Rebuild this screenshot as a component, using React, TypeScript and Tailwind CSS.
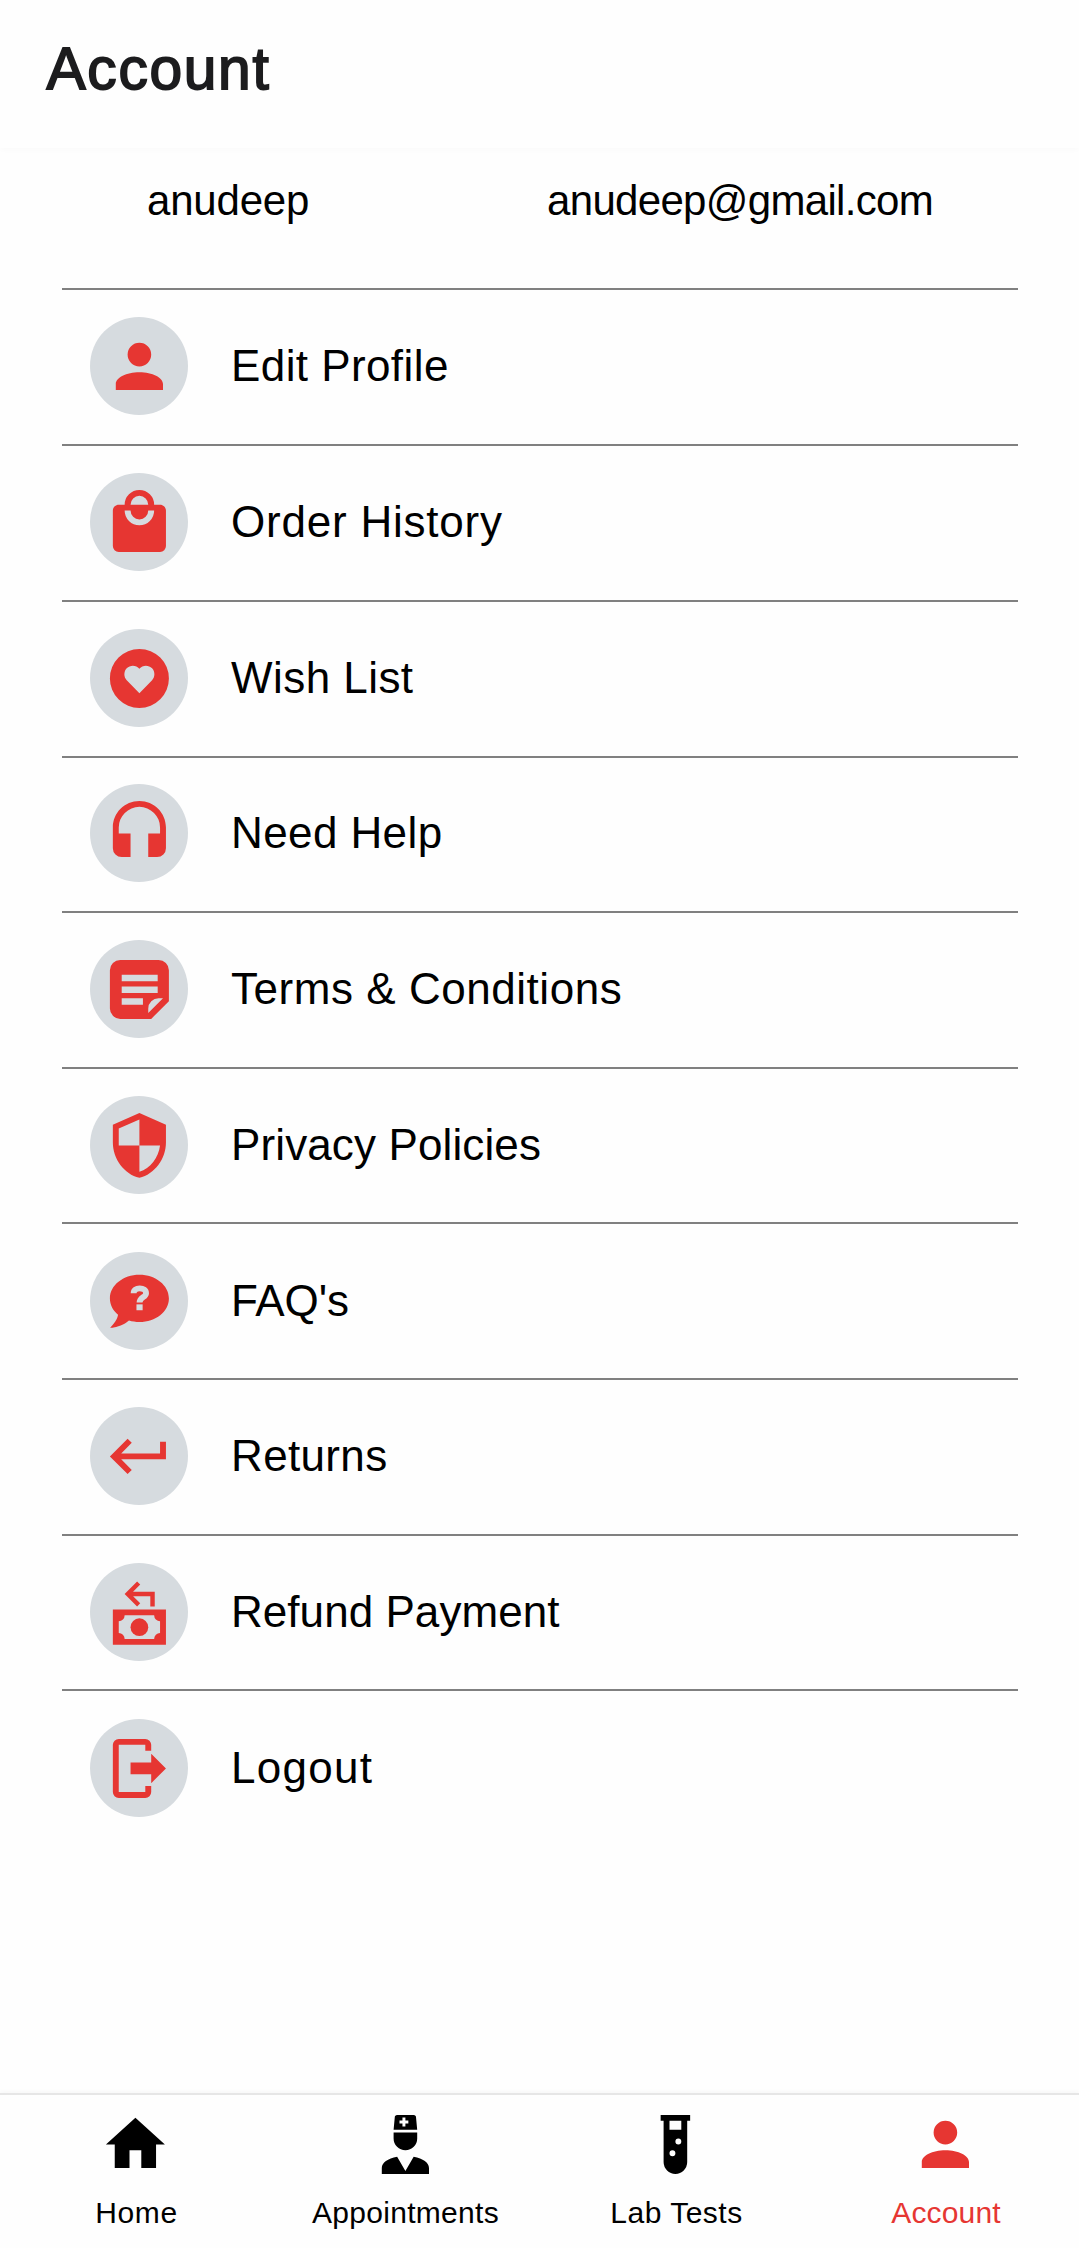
import type { ReactNode } from "react";

type IconProps = { className?: string; children: ReactNode };

function Icon({ className = "", children }: IconProps) {
  return (
    <svg viewBox="0 0 24 24" fill="currentColor" aria-hidden="true" className={`size-[70.8px] shrink-0 ${className}`}>
      {children}
    </svg>
  );
}

const person = (
  <path d="M12 4a4 4 0 0 1 4 4 4 4 0 0 1-4 4 4 4 0 0 1-4-4 4 4 0 0 1 4-4m0 10c4.42 0 8 1.79 8 4v2H4v-2c0-2.21 3.58-4 8-4z" />
);

const bag = (
  <path d="M12 13A5 5 0 0 1 7 8H9A3 3 0 0 0 12 11A3 3 0 0 0 15 8H17A5 5 0 0 1 12 13M12 3A3 3 0 0 1 15 6H9A3 3 0 0 1 12 3M19 6H17A5 5 0 0 0 12 1A5 5 0 0 0 7 6H5C3.89 6 3 6.89 3 8V20A2 2 0 0 0 5 22H19A2 2 0 0 0 21 20V8C21 6.89 20.1 6 19 6Z" />
);

const heart = (
  <path
    fillRule="evenodd"
    d="M12 2A10 10 0 0 1 22 12A10 10 0 0 1 12 22A10 10 0 0 1 2 12A10 10 0 0 1 12 2ZM12 17L16.3 12.65C17.35 11.5 17.35 9.75 16.3 8.6C15.1 7.4 13.1 7.45 12 8.75C10.9 7.45 8.9 7.4 7.7 8.6C6.65 9.75 6.65 11.5 7.7 12.65Z"
  />
);

const headphones = (
  <path d="M12 1C7 1 3 5 3 10V17A3 3 0 0 0 6 20H9V12H5V10A7 7 0 0 1 12 3A7 7 0 0 1 19 10V12H15V20H18A3 3 0 0 0 21 17V10C21 5 16.97 1 12 1Z" />
);

const note = (
  <path
    fillRule="evenodd"
    d="M5.5 2H18.5A3.5 3.5 0 0 1 22 5.5V16L16 22H5.5A3.5 3.5 0 0 1 2 18.5V5.5A3.5 3.5 0 0 1 5.5 2ZM6 7V9.2H18.2V7ZM6 11V13.2H18.2V11ZM6 15V17.2H13.2V15ZM15 20L20 15H18.5A3.5 3.5 0 0 0 15 18.5Z"
  />
);

const shield = (
  <path d="M12 12H19C18.47 16.11 15.72 19.78 12 20.92V12H5V6.3L12 3.19M12 1L3 5V11C3 16.55 6.84 21.73 12 23C17.16 21.73 21 16.55 21 11V5L12 1Z" />
);

const question = (
  <>
    <path d="M12 3C17.5 3 22 6.58 22 11C22 15.42 17.5 19 12 19C10.76 19 9.57 18.82 8.47 18.5C5.55 21 2 21 2 21C4.33 18.67 4.7 17.1 4.75 16.5C3.05 15.07 2 13.13 2 11C2 6.58 6.5 3 12 3Z" />
    <path
      d="M10.05 9.2C10.05 8.1 10.9 7.6 12.1 7.6C13.4 7.6 14.25 8.15 14.25 9.2C14.25 10.6 12.05 10.6 12.05 12.4"
      fill="none"
      stroke="#d6dbdf"
      strokeWidth="2"
    />
    <path d="M11 13h2.1v2H11z" fill="#d6dbdf" />
  </>
);

const returnArrow = (
  <path d="M19 7V11H5.83L9.41 7.41L8 6L2 12L8 18L9.41 16.58L5.83 13H21V7H19Z" />
);

const refund = (
  <>
    <path
      fillRule="evenodd"
      d="M3 11H21V23H3ZM5 15V19A2 2 0 0 1 7 21H17A2 2 0 0 1 19 19V15A2 2 0 0 1 17 13H7A2 2 0 0 1 5 15Z"
    />
    <circle cx="12" cy="17" r="3" />
    <path d="M11.75 2.05L8.05 5.75L11.75 9.45M8.1 5.75H16.45V10" fill="none" stroke="currentColor" strokeWidth="1.5" />
  </>
);

const logout = (
  <path d="M14 18h2v2a2 2 0 0 1-2 2H5a2 2 0 0 1-2-2V4a2 2 0 0 1 2-2h9a2 2 0 0 1 2 2v2h-2V4H5v16h9zM16 17V14H9V10H16V7L21 12Z" />
);

const home = <path d="M10 20V14H14V20H19V12H22L12 3L2 12H5V20H10Z" />;

const doctor = (
  <>
    <path
      fillRule="evenodd"
      d="M9.2 2H14.8C15.3 2 15.6 2.3 15.6 2.8L16 7H8L8.4 2.8C8.4 2.3 8.7 2 9.2 2ZM11 2.9V3.9H10V4.9H11V5.9H12V4.9H13V3.9H12V2.9Z"
    />
    <path d="M8 8H16V10A4 4 0 0 1 8 10ZM9.2 16.2L12 21L14.8 16.2C18 16.8 20 18.2 20 20V22H4V20C4 18.2 6 16.8 9.2 16.2Z" />
  </>
);

const testTube = (
  <path
    fillRule="evenodd"
    d="M7 2V4H8V18A4 4 0 0 0 16 18V4H17V2ZM10 4H14V7H10ZM13 10A1 1 0 0 1 13 12A1 1 0 0 1 13 10ZM11 14A1 1 0 0 1 11 16A1 1 0 0 1 11 14Z"
  />
);

const menu = [
  { label: "Edit Profile", icon: person, row: "h-[156px] pt-[27px]", text: "tracking-[0.42px]" },
  { label: "Order History", icon: bag, row: "h-[156px] pt-[27px]", text: "tracking-[0.78px]" },
  { label: "Wish List", icon: heart, row: "h-[156px] pt-[27px]", text: "tracking-[0.45px]" },
  { label: "Need Help", icon: headphones, row: "h-[155px] pt-[26px]", text: "tracking-[0.4px]" },
  { label: "Terms & Conditions", icon: note, row: "h-[156px] pt-[27px]", text: "tracking-[0.54px]" },
  { label: "Privacy Policies", icon: shield, row: "h-[155px] pt-[27px]", text: "tracking-[0.12px]" },
  { label: "FAQ's", icon: question, row: "h-[156px] pt-[28px]", text: "tracking-[-0.1px]" },
  { label: "Returns", icon: returnArrow, row: "h-[156px] pt-[27px]", text: "tracking-[0.35px]" },
  { label: "Refund Payment", icon: refund, row: "h-[155px] pt-[27px]", text: "tracking-[0.05px]" },
  { label: "Logout", icon: logout, row: "h-[156px] pt-[28px]", text: "tracking-[1.3px]" },
];

const tabs = [
  { label: "Home", icon: home, color: "text-black", text: "pl-[2px] tracking-[0.6px]" },
  { label: "Appointments", icon: doctor, color: "text-black", text: "tracking-[0.3px]" },
  { label: "Lab Tests", icon: testTube, color: "text-black", text: "pl-[2px] tracking-[0.5px]" },
  { label: "Account", icon: person, color: "text-[#e63632]", text: "pl-px tracking-[0.15px]" },
];

export default function App() {
  return (
    <div className="flex h-[2248px] w-[1079px] flex-col overflow-hidden bg-[#fefefe] font-['Liberation_Sans',Arial,sans-serif] text-black">
      <header className="h-[148px] shrink-0 bg-[#fefefe] pl-[46.5px] shadow-[0_2px_6px_rgba(0,0,0,0.02)]">
        <h1 className="text-[58.7px] leading-[137px] font-normal tracking-[1.7px] text-[#1c1c1e] [-webkit-text-stroke:1.8px_#1c1c1e]">
          Account
        </h1>
      </header>

      <main className="flex-1">
        <section className="flex h-[140px] justify-between pt-[20px] pr-[146px] pl-[147px] text-[42px] leading-[65px]">
          <span className="tracking-[-0.2px]">anudeep</span>
          <span className="tracking-[-0.68px]">anudeep@gmail.com</span>
        </section>

        <ul className="mr-[61px] ml-[62px]">
          {menu.map((item) => (
            <li key={item.label} className={`border-t-2 border-[#808080] pl-[28px] ${item.row}`}>
              <div className="flex items-center">
                <span className="flex size-[98px] shrink-0 items-center justify-center rounded-full bg-[#d6dbdf] text-[#e63632]">
                  <Icon>{item.icon}</Icon>
                </span>
                <span className={`ml-[43px] text-[44px] leading-[98px] whitespace-nowrap ${item.text}`}>{item.label}</span>
              </div>
            </li>
          ))}
        </ul>
      </main>

      <nav className="grid h-[155px] shrink-0 grid-cols-[repeat(4,270px)] border-t-2 border-[#e6e6e6] bg-[#fefefe] pl-[0.5px] shadow-[0_-1px_5px_rgba(0,0,0,0.04)]">
        {tabs.map((tab) => (
          <div key={tab.label} className={`flex flex-col items-center pt-[14px] ${tab.color}`}>
            <Icon>{tab.icon}</Icon>
            <span className={`mt-[13px] text-[30px] leading-[40px] whitespace-nowrap ${tab.text}`}>{tab.label}</span>
          </div>
        ))}
      </nav>
    </div>
  );
}
